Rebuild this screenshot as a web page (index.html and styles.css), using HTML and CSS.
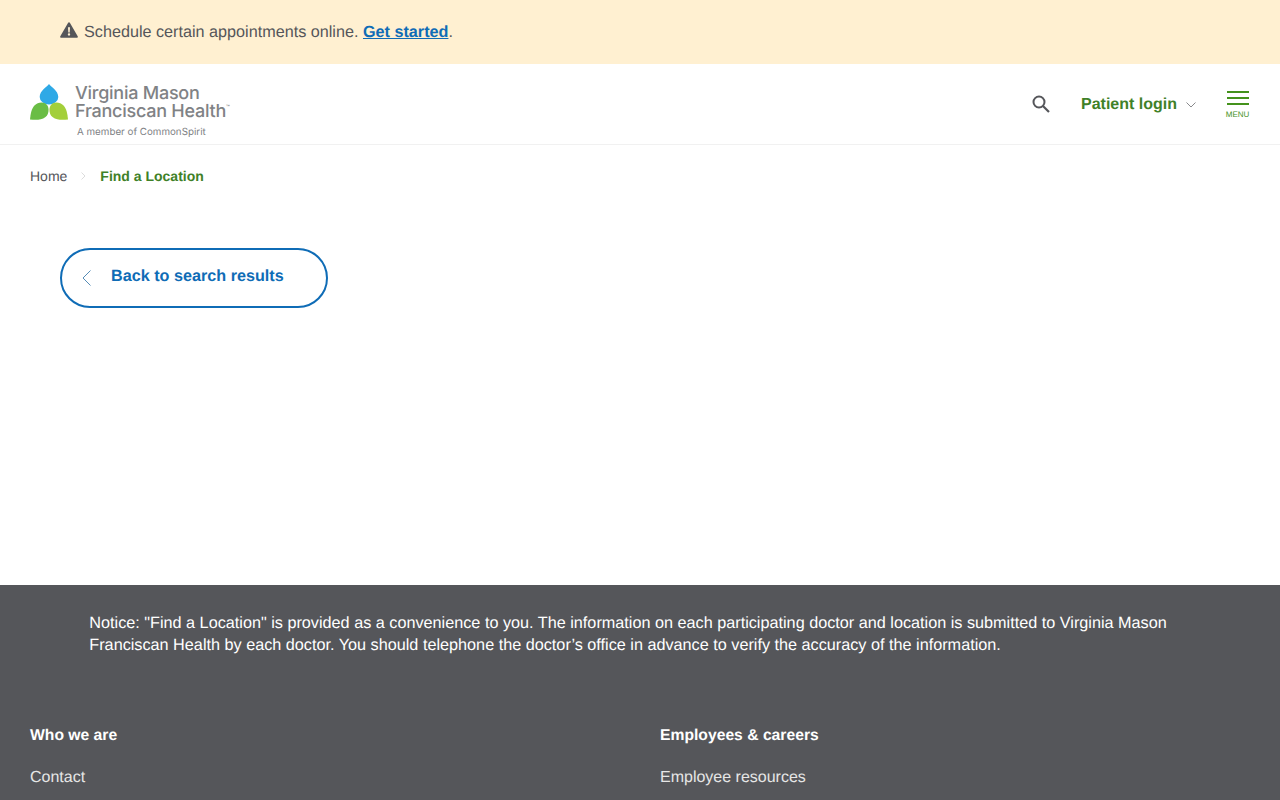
FILE: index.html
```html
<!DOCTYPE html>
<html>

<head>
    <meta charset="UTF-8">
    <title>Find a Location</title>
    <link rel="stylesheet" href="styles.css">
</head>

<body>
    <div class="alert">
        <svg class="alert-icon" viewBox="0 0 18 16" width="18" height="16">
            <path fill="#55565a" fill-rule="evenodd" d="M9 0.3c.4 0 .8.2 1 .6l7.7 13.3c.4.7-.1 1.5-.9 1.5H1.2c-.8 0-1.3-.8-.9-1.5L8 .9c.2-.4.6-.6 1-.6zM8 5.2l.3 5.2h1.4l.3-5.2H8zM9 11.2a1.2 1.2 0 1 0 0 2.4 1.2 1.2 0 0 0 0-2.4z" />
        </svg>
        <span>Schedule certain appointments online. <a href="#">Get started</a>.</span>
    </div>

    <header class="header">
        <a class="logo" href="#">
            <svg class="logo-mark" viewBox="0 0 38 36" width="38" height="36">
                <path fill="#2ea9e6" d="M19 0c1.500 2.500 9.300 6.500 9.300 13a9.300 7.500 0 0 1-18.600 0c0-6.500 7.800-10.500 9.300-13z" />
                <path fill="#6abd45" d="M0 35.500C.5 30 1.500 24.500 4.500 21.500c3.500-3.500 9.500-4 12.500-.5 2.500 3 2 9-1.500 12-4.500 3.500-10.500 3-15.500 2.500z" />
                <path fill="#a3cf3a" d="M38 35.500C37.500 30 36.500 24.500 33.500 21.500c-3.500-3.500-9.500-4-12.500-.5-2.500 3-2 9 1.500 12 4.500 3.500 10.500 3 15.500 2.500z" />
            </svg>
            <div class="logo-text">
                <div class="logo-name">Virginia Mason<br>Franciscan Health<sup>™</sup></div>
                <div class="logo-sub">A member of CommonSpirit</div>
            </div>
        </a>
        <div class="header-right">
            <svg class="search-icon" viewBox="0 0 18 18" width="18" height="18">
                <circle cx="7" cy="7" r="5.500" fill="none" stroke="#55565a" stroke-width="2" />
                <path d="M11 11l6 6" stroke="#55565a" stroke-width="2.200" />
            </svg>
            <a class="login" href="#">Patient login
                <svg viewBox="0 0 10 6" width="10" height="6">
                    <path d="M.5.5L5 5 9.500.5" fill="none" stroke="#55565a" stroke-width=".7" />
                </svg>
            </a>
            <div class="menu">
                <span class="bar"></span>
                <span class="bar"></span>
                <span class="bar"></span>
                <span class="menu-txt">MENU</span>
            </div>
        </div>
    </header>

    <div class="crumbs">
        <a href="#">Home</a>
        <svg viewBox="0 0 5 8" width="5" height="8">
            <path d="M.5.5L4 4 .5 7.500" fill="none" stroke="#dcdcdc" stroke-width="1" />
        </svg>
        <b>Find a Location</b>
    </div>

    <main class="main">
        <a class="back" href="#">
            <svg viewBox="0 0 9 16" width="9" height="16">
                <path d="M8.500.5L1 8l7.500 7.500" fill="none" stroke="#2b6ea3" stroke-width=".8" />
            </svg>
            <span>Back to search results</span>
        </a>
    </main>

    <footer class="footer">
        <p class="notice">Notice: "Find a Location" is provided as a convenience to you. The information on each participating doctor and location is submitted to Virginia Mason Franciscan Health by each doctor. You should telephone the doctor’s office in advance to verify the accuracy of the information.</p>
        <div class="cols">
            <div class="col">
                <h4>Who we are</h4>
                <a href="#">Contact</a>
            </div>
            <div class="col">
                <h4>Employees &amp; careers</h4>
                <a href="#">Employee resources</a>
            </div>
        </div>
    </footer>
</body>

</html>
```

FILE: styles.css
```css
* {
    margin: 0;
    padding: 0;
    box-sizing: border-box;
}

body {
    background: #fff;
    color: #55565a;
    font-family: "Liberation Sans", Arial, sans-serif;
    font-size: 16px;
    text-rendering: geometricPrecision;
}

a {
    text-decoration: none;
}

.alert {
    height: 64px;
    background: #fff0d1;
    padding: 0 60px;
    display: flex;
    align-items: center;
    gap: 6px;
    font-size: 16.200px;
}

.alert-icon {
    margin-top: -4px;
}

.alert a {
    color: #0f6cb6;
    font-weight: bold;
    text-decoration: underline;
}

.header {
    height: 81px;
    border-bottom: 1px solid #f1f1f1;
    padding: 0 30px;
    display: flex;
    align-items: center;
    justify-content: space-between;
}

.logo {
    display: flex;
    align-items: flex-start;
    gap: 7px;
    align-self: flex-start;
    margin-top: 20px;
}

.logo-text {
    color: #808285;
    font-family: Inter, sans-serif;
    margin-top: 1px;
}

.logo-name {
    font-size: 18px;
    font-weight: 500;
    line-height: 18px;
    letter-spacing: -.25px;
}

.logo-name sup {
    font-size: 6px;
    vertical-align: 8px;
    line-height: 0;
}

.logo-sub {
    font-size: 9.800px;
    line-height: 13px;
    margin-top: 5px;
    margin-left: 2px;
}

.header-right {
    display: flex;
    align-items: center;
    margin-right: 1px;
    padding-top: 1px;
}

.search-icon {
    margin-top: -2px;
    margin-right: 31px;
}

.login {
    color: #3f8128;
    font-weight: bold;
    display: flex;
    align-items: center;
    gap: 9px;
    margin-right: 30px;
}

.menu {
    width: 23px;
    display: flex;
    flex-direction: column;
    align-items: center;
    gap: 4px;
}

.bar {
    width: 22px;
    height: 2px;
    background: #44921c;
    display: block;
}

.menu-txt {
    color: #44921c;
    font-size: 8px;
    line-height: 9px;
    margin-top: 1px;
}

.crumbs {
    padding: 23px 30px 0;
    display: flex;
    align-items: center;
    gap: 14px;
    font-size: 14px;
    line-height: 16px;
}

.crumbs a {
    color: #55565a;
}

.crumbs b {
    color: #3f8128;
}

.main {
    height: 401px;
    padding: 64px 60px 0;
}

.back {
    width: 268px;
    height: 60px;
    border: 2px solid #0f6cb6;
    border-radius: 30px;
    color: #0f6cb6;
    font-size: 16.200px;
    font-weight: bold;
    display: flex;
    align-items: center;
    padding: 0 0 0 20px;
    gap: 20px;
}

.back span {
    margin-top: -3px;
}

.footer {
    background: #55565a;
    color: #fff;
    height: 215px;
    padding: 27px 30px 0;
    overflow: hidden;
}

.notice {
    font-size: 16.235px;
    padding: 0 60px 0 59.300px;
    line-height: 22px;
    margin-bottom: 69px;
}

.cols {
    display: grid;
    grid-template-columns: 630px 1fr;
}

.col h4 {
    font-size: 15.700px;
    line-height: 22px;
    margin-bottom: 20px;
}

.col a {
    color: #e6e6e6;
    line-height: 22px;
    display: block;
}
```
